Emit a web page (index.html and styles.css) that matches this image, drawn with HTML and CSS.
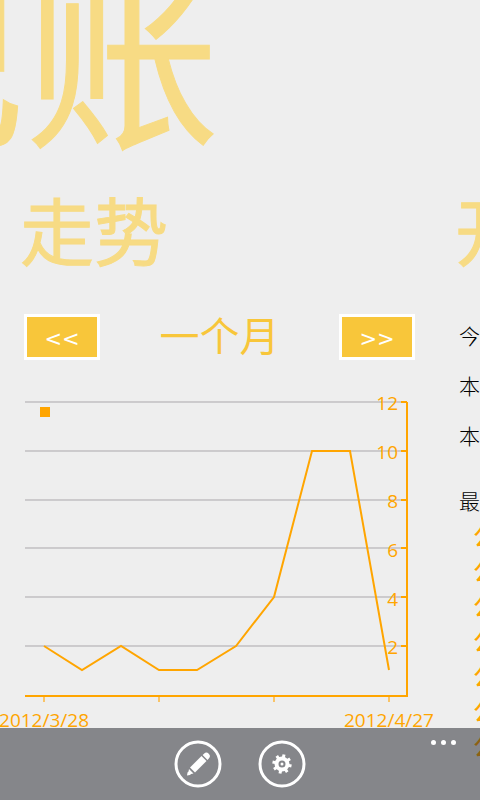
FILE: index.html
```html
<!DOCTYPE html>
<html lang="zh-CN">
<head>
<meta charset="utf-8">
<meta name="viewport" content="width=device-width, initial-scale=1">
<title>记账</title>
<link rel="stylesheet" href="styles.css">
</head>
<body>
<main class="panorama">
  <h1 class="app-title">记账</h1>
  <div class="panels">
    <section class="panel">
      <h2 class="panel-title">走势</h2>
      <div class="period">
        <button class="step" type="button" aria-label="上一个">&lt;&lt;</button>
        <span class="period-name">一个月</span>
        <button class="step" type="button" aria-label="下一个">&gt;&gt;</button>
      </div>
      <svg class="chart" viewBox="0 0 390 356" role="img" aria-label="走势">
        <g class="grid">
          <path d="M1 18H383M1 67H383M1 116H383M1 164H383M1 213H383M1 262H383"/>
        </g>
        <rect class="legend" x="16" y="23" width="10" height="10"/>
        <path class="axis" d="M1 312H383V18"/>
        <path class="ticks" d="M377 18H383M377 67H383M377 116H383M377 164H383M377 213H383M377 262H383"/>
        <path class="ticks ticks-x" d="M20 313V318M135 313V318M250 313V318M365 313V318"/>
        <polyline class="line" points="20,262 58,286 97,262 135,286 173,286 212,262 250,213 288,67 326,67 365,286"/>
        <g class="label label-y">
          <text x="374" y="26">12</text>
          <text x="374" y="75">10</text>
          <text x="374" y="124">8</text>
          <text x="374" y="173">6</text>
          <text x="374" y="222">4</text>
          <text x="374" y="270">2</text>
        </g>
        <g class="label label-x">
          <text x="20" y="343">2012/3/28</text>
          <text x="365" y="343">2012/4/27</text>
        </g>
      </svg>
    </section>
    <section class="panel">
      <h2 class="panel-title">开支</h2>
      <div class="totals">
        <p>今天</p>
        <p>本周</p>
        <p>本月</p>
      </div>
      <p class="recent-title">最近</p>
      <ul class="recent">
        <li>公交</li>
        <li>公交</li>
        <li>公交</li>
        <li>公交</li>
        <li>公交</li>
        <li>公交</li>
        <li>公交</li>
      </ul>
    </section>
  </div>
</main>
<footer class="app-bar">
  <button class="round" type="button" aria-label="编辑">
    <svg viewBox="0 0 48 48">
      <circle class="ring" cx="24" cy="24" r="22"/>
      <path d="M27.500 16L32.500 21L21 32.500L16 27.500Z"/>
      <path d="M28.600 15L30 13.700A3.300 3.300 0 0 1 34.800 18.400L33.500 19.900Z"/>
      <path d="M15 29L19.500 33.500L17 34L16 35L13 35.500L13.500 32.500L14.500 31.500Z"/>
    </svg>
  </button>
  <button class="round" type="button" aria-label="设置">
    <svg viewBox="0 0 48 48">
      <circle class="ring" cx="24" cy="24" r="22"/>
      <circle class="gear" cx="24" cy="24" r="5.500"/>
      <path class="teeth" d="M24 17.500V14.300M24 30.500V33.700M17.500 24H14.300M30.500 24H33.700M19.400 19.400L17.200 17.200M28.600 28.600L30.800 30.800M28.600 19.400L30.800 17.200M19.400 28.600L17.200 30.800" transform="rotate(12 24 24)"/>
      <circle cx="24" cy="24" r="1.500"/>
    </svg>
  </button>
  <button class="more" type="button" aria-label="更多"><i></i><i></i><i></i></button>
</footer>
</body>
</html>
```
FILE: styles.css
```css
* {
  box-sizing: border-box;
}

body {
  margin: 0;
  background: #eee;
  color: #000;
  font-family: "Open Sans", "Noto Sans CJK SC", sans-serif;
}

h1, h2, p, ul {
  margin: 0;
  padding: 0;
  font-weight: 400;
}

.panorama {
  height: 100vh;
  overflow: hidden;
}

.app-title {
  margin: -50px 0 0 -170px;
  color: #f7db84;
  font-family: "Noto Sans CJK SC", sans-serif;
  font-size: 195px;
  line-height: 198px;
  white-space: nowrap;
  -webkit-text-stroke: 1px #f7db84;
}

.panels {
  display: flex;
  gap: 44px;
  margin-top: 45px;
  padding-left: 24px;
}

.panel {
  flex: 0 0 calc(100vw - 89px);
}

.panel-title {
  margin-left: -4px;
  color: #f7db84;
  font-family: "Noto Sans CJK SC", sans-serif;
  font-size: 74px;
  line-height: 70px;
  -webkit-text-stroke: 1px #f7db84;
}

.period {
  display: flex;
  justify-content: space-between;
  align-items: center;
  margin-top: 51px;
}

.period-name {
  padding-bottom: 6px;
  color: #f8c63a;
  font-family: "Noto Sans CJK SC", sans-serif;
  font-size: 40px;
  line-height: 40px;
}

.step {
  width: 76px;
  height: 46px;
  padding: 4px 0 0;
  border: 3px solid #fff;
  background: #f8c63a;
  color: #fff;
  font-family: "DejaVu Sans", sans-serif;
  font-size: 21px;
  line-height: 36px;
}

.chart {
  display: block;
  width: calc(100% - 1px);
  margin-top: 24px;
  overflow: visible;
}

.grid {
  stroke: #aaa7ab;
}

.legend {
  fill: #ffa500;
}

.axis, .line, .ticks {
  fill: none;
  stroke: #ffa500;
  stroke-width: 2;
}

.ticks-x {
  stroke: #f9c468;
}

.label {
  fill: #ffa500;
  font-size: 19px;
}

.label-y {
  text-anchor: end;
}

.label-x {
  text-anchor: middle;
}

.totals p, .recent-title {
  font-family: "Noto Sans CJK SC", sans-serif;
  font-size: 21px;
  font-weight: 300;
  line-height: 50px;
}

.totals {
  margin-top: 47px;
}

.recent-title {
  margin-top: 15px;
}

.recent {
  margin-top: -8px;
  padding-left: 14px;
  color: #ffa500;
  font-family: "Noto Sans CJK SC", sans-serif;
  font-size: 27px;
  line-height: 35px;
  list-style: none;
}

.app-bar {
  position: fixed;
  right: 0;
  bottom: 0;
  left: 0;
  display: flex;
  justify-content: center;
  gap: 36px;
  height: 72px;
  padding-top: 12px;
  background: rgba(28, 30, 38, 0.5);
}

.round, .more {
  padding: 0;
  border: 0;
  background: none;
}

.round {
  width: 48px;
  height: 48px;
}

.round svg {
  display: block;
  fill: #fff;
}

.round .ring, .round .gear, .teeth {
  fill: none;
  stroke: #fff;
  stroke-width: 3;
}

.round .gear {
  stroke-width: 4;
}

.more {
  position: absolute;
  top: 12px;
  right: 24px;
  display: flex;
  gap: 5px;
}

.more i {
  width: 5px;
  height: 5px;
  border-radius: 50%;
  background: #fff;
}
```
